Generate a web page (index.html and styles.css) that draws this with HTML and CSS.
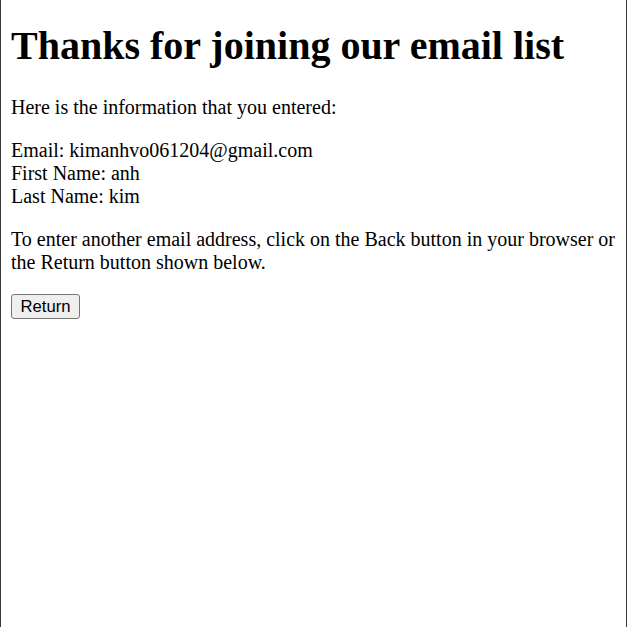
FILE: index.html
```html
<!DOCTYPE html>
<html>
<head>
<meta charset="utf-8">
<link rel="stylesheet" href="styles.css">
</head>
<body>
<h1 class="title">Thanks for joining our email list</h1>
<p class="text">Here is the information that you entered:</p>
<p class="text">Email: kimanhvo061204@gmail.com<br>First Name: anh<br>Last Name: kim</p>
<p class="text">To enter another email address, click on the Back button in your browser or the Return button shown below.</p>
<form class="form"><button type="button" class="btn">Return</button></form>
</body>
</html>
```

FILE: styles.css
```css
html {
  border-left: 1px solid #3a3a3a;
  border-right: 1px solid #3a3a3a;
  min-height: 100%;
  box-sizing: border-box;
  background: #fff;
}
body {
  margin: 10px;
  font-family: "Liberation Serif", "Times New Roman", serif;
  font-size: 20px;
  color: #000;
}
.title {
  font-size: 40px;
  margin: 12px 0 26.8px;
}
.text {
  margin: 20px 0;
}
.form {
  margin: 0;
}
.btn {
  font-family: "Liberation Sans", Arial, sans-serif;
  font-size: 16.67px;
  padding: 1.5px 8.5px;
  border: 1.25px solid #767676;
  border-radius: 3px;
  background: #efefef;
  color: #000;
}
```
